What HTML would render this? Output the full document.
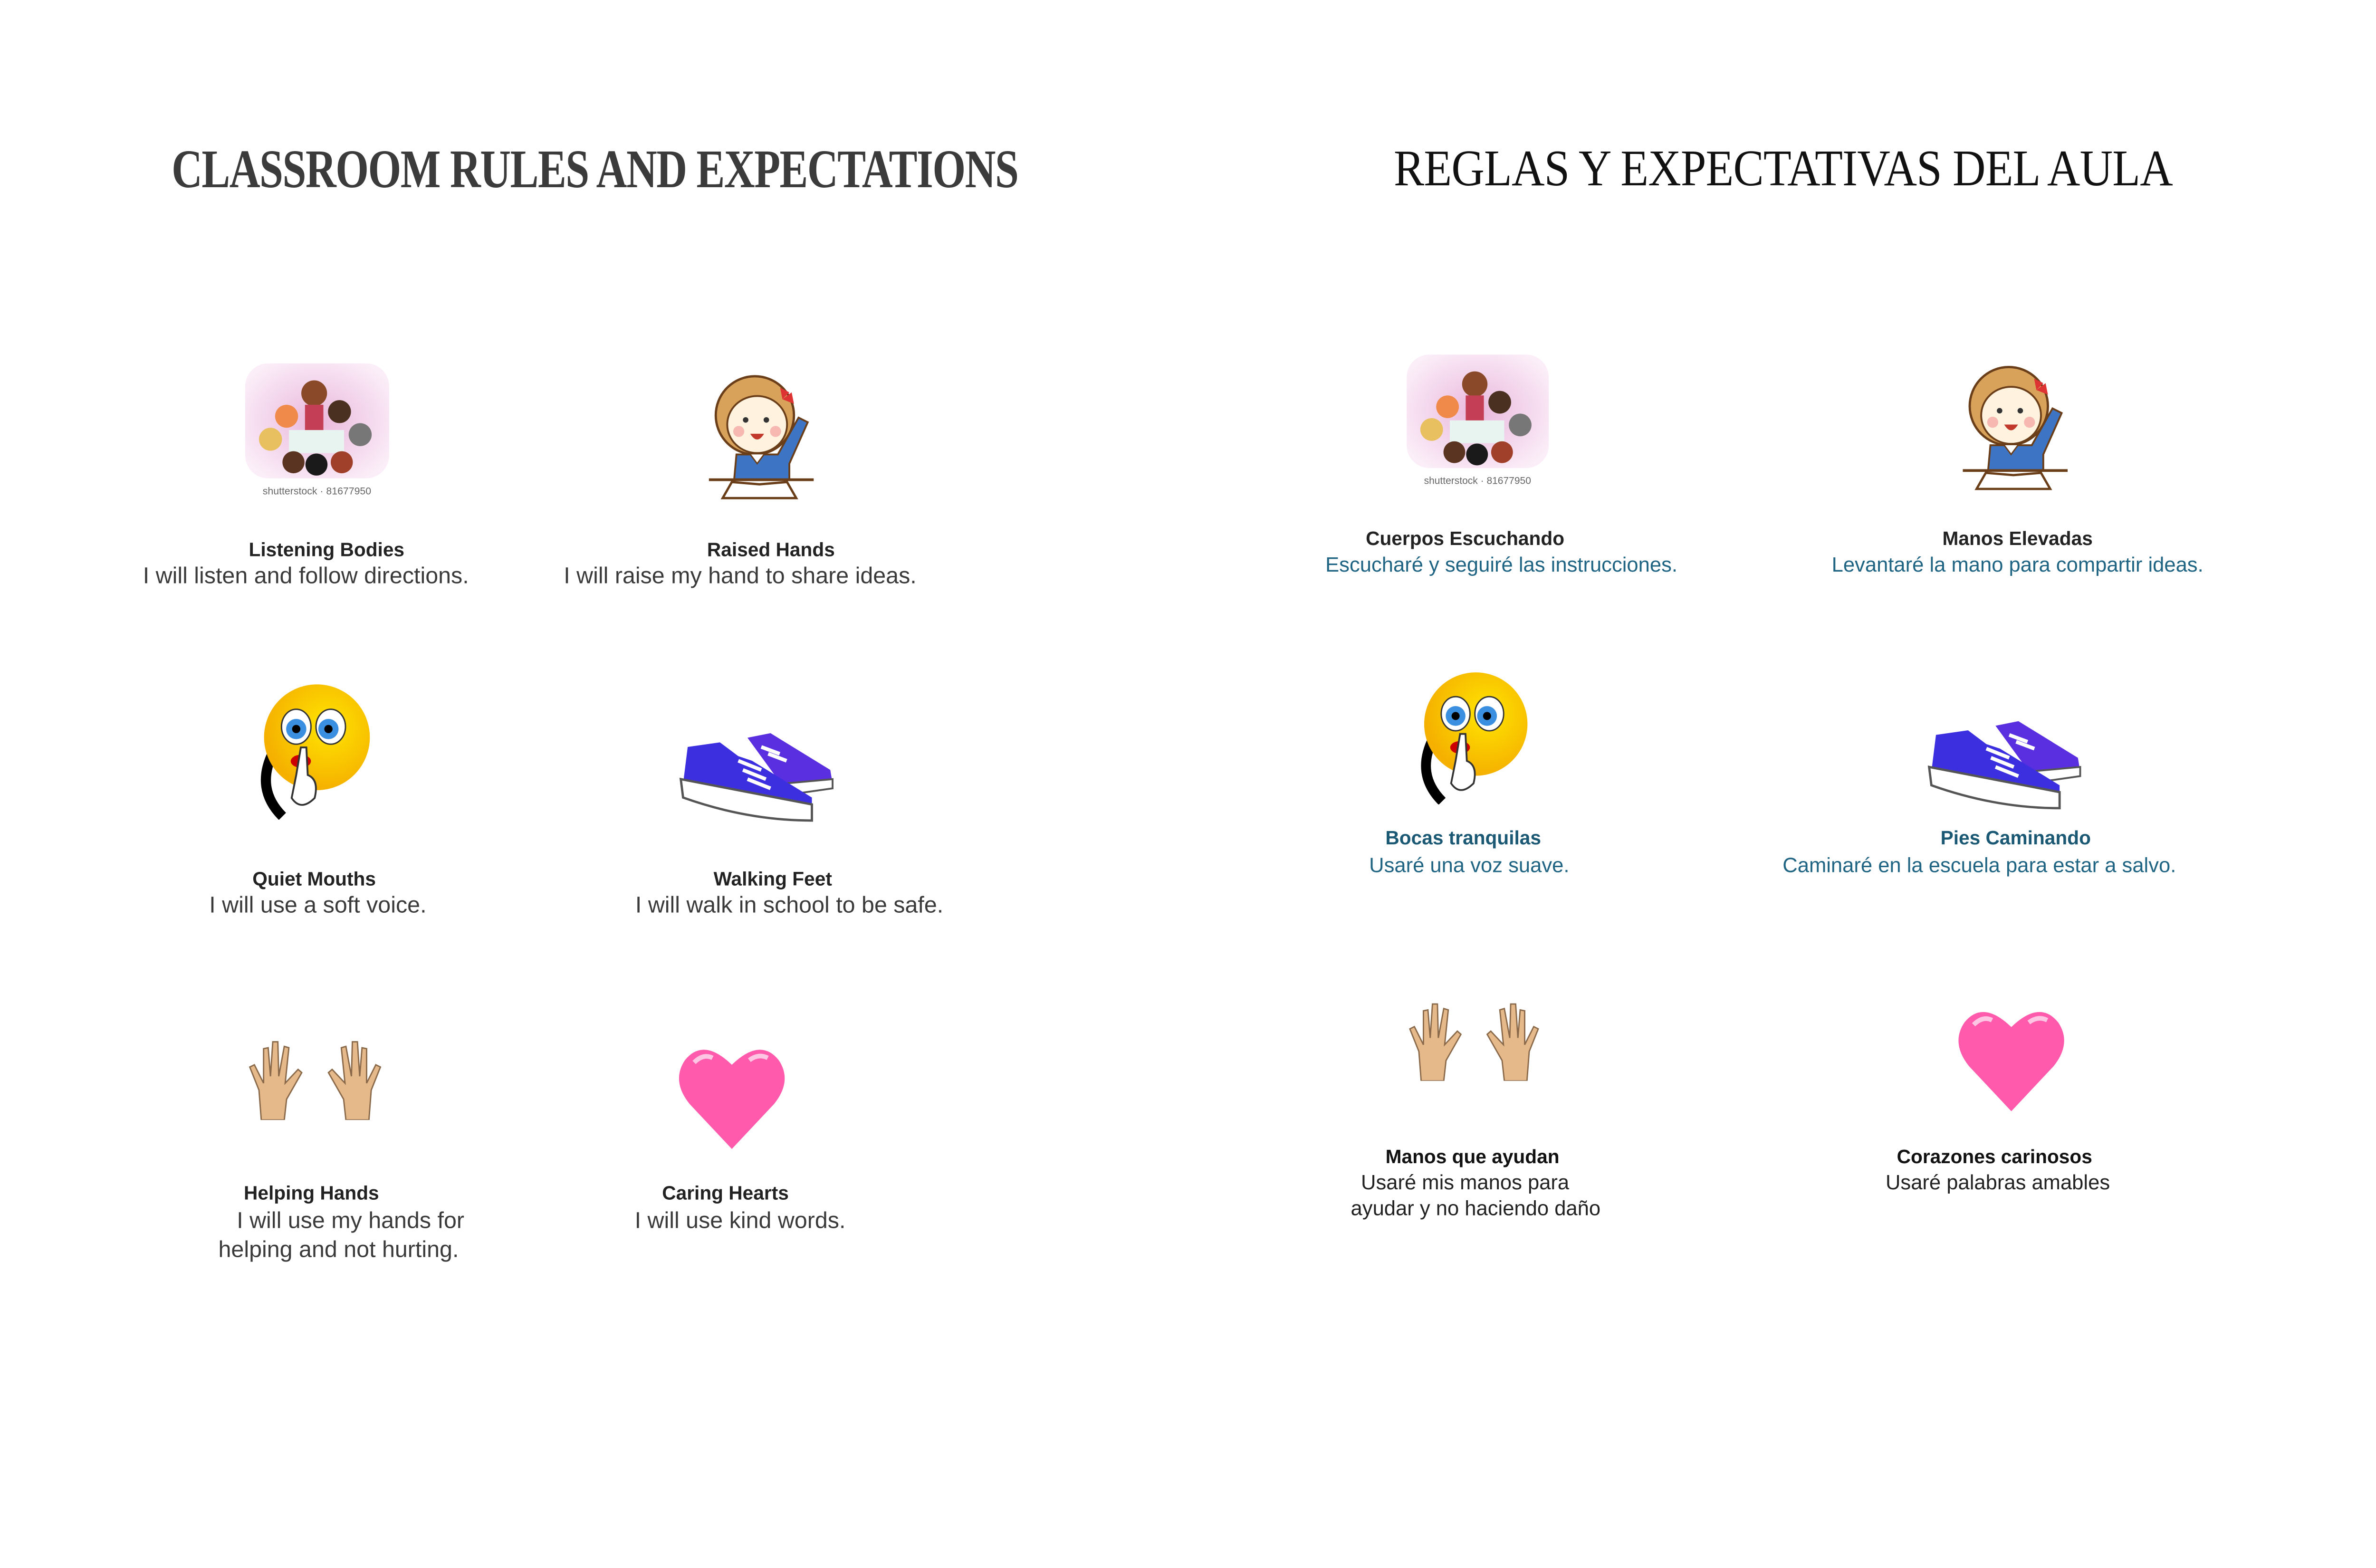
<!DOCTYPE html>
<html><head><meta charset="utf-8">
<style>
html,body{margin:0;padding:0;background:#fff;}
body{width:5100px;height:3300px;position:relative;overflow:hidden;font-family:"Liberation Sans",sans-serif;}
#w{position:absolute;left:0;top:0;width:5100px;height:3300px;transform:scale(0.968);transform-origin:0 0;}
.t{position:absolute;white-space:nowrap;transform:translateX(-50%);font-size:50px;line-height:56px;color:#3a3a3a;}
.r{font-size:45px;}
.b{font-weight:bold;color:#222;font-size:42px;}
.teal{color:#1f6483;}
.tb{font-weight:bold;color:#1a5874;font-size:42px;}
.title{position:absolute;white-space:nowrap;transform-origin:0 0;}
svg{position:absolute;}
</style></head><body><div id="w">

<div class="title" style="left:373px;top:300px;font-family:'Liberation Serif',serif;font-weight:bold;font-size:118px;color:#3b3b3b;transform:scaleX(0.786);letter-spacing:-2px;">CLASSROOM RULES AND EXPECTATIONS</div>
<div class="title" style="left:3030px;top:302px;font-family:'Liberation Serif',serif;font-size:112px;color:#111;transform:scaleX(0.888);letter-spacing:-1px;">REGLAS Y EXPECTATIVAS DEL AULA</div>

<svg style="left:528px;top:785px" width="323" height="304" viewBox="0 0 323 304">
<defs><radialGradient id="pg" cx="50%" cy="50%" r="60%"><stop offset="0" stop-color="#e9b7dc"/><stop offset="1" stop-color="#fbeef8"/></radialGradient></defs>
<rect x="5" y="5" width="313" height="250" rx="50" fill="url(#pg)"/>
<circle cx="155" cy="70" r="28" fill="#8a4a2a"/><rect x="135" y="95" width="40" height="80" fill="#c43f55"/>
<circle cx="95" cy="120" r="25" fill="#f08a4a"/><circle cx="210" cy="110" r="25" fill="#4a3020"/>
<circle cx="60" cy="170" r="25" fill="#e8c060"/><circle cx="255" cy="160" r="25" fill="#777"/>
<rect x="100" y="150" width="120" height="50" fill="#e8f4f0"/>
<circle cx="110" cy="220" r="24" fill="#5a3420"/><circle cx="160" cy="225" r="24" fill="#1a1a1a"/><circle cx="215" cy="220" r="24" fill="#a0402a"/>
<text x="161" y="290" font-size="22" fill="#666" text-anchor="middle" font-family="Liberation Sans">shutterstock · 81677950</text>
</svg>
<svg style="left:3049px;top:766px" width="327" height="300" viewBox="0 0 323 304">
<rect x="5" y="5" width="313" height="250" rx="50" fill="url(#pg)"/>
<circle cx="155" cy="70" r="28" fill="#8a4a2a"/><rect x="135" y="95" width="40" height="80" fill="#c43f55"/>
<circle cx="95" cy="120" r="25" fill="#f08a4a"/><circle cx="210" cy="110" r="25" fill="#4a3020"/>
<circle cx="60" cy="170" r="25" fill="#e8c060"/><circle cx="255" cy="160" r="25" fill="#777"/>
<rect x="100" y="150" width="120" height="50" fill="#e8f4f0"/>
<circle cx="110" cy="220" r="24" fill="#5a3420"/><circle cx="160" cy="225" r="24" fill="#1a1a1a"/><circle cx="215" cy="220" r="24" fill="#a0402a"/>
<text x="161" y="290" font-size="22" fill="#666" text-anchor="middle" font-family="Liberation Sans">shutterstock · 81677950</text>
</svg>

<svg style="left:1541px;top:808px" width="228" height="281" viewBox="0 0 228 281">
<circle cx="100" cy="95" r="85" fill="#d9a25a" stroke="#6b3e1a" stroke-width="5"/>
<ellipse cx="105" cy="115" rx="65" ry="62" fill="#fff3e0" stroke="#6b3e1a" stroke-width="4"/>
<circle cx="80" cy="105" r="6" fill="#333"/><circle cx="125" cy="105" r="6" fill="#333"/>
<circle cx="65" cy="130" r="12" fill="#f6b8b0"/><circle cx="145" cy="130" r="12" fill="#f6b8b0"/>
<path d="M90 135 Q105 160 120 135 Z" fill="#c0392b"/>
<path d="M160 60 l20 -15 l5 25 z M160 60 l-5 -25 l20 10z" fill="#d33"/>
<path d="M60 180 L150 180 L195 100 L215 110 L175 200 L175 235 L55 235 Z" fill="#3d75c4" stroke="#6b3e1a" stroke-width="4"/>
<path d="M90 180 L105 200 L120 180" fill="#fff" stroke="#6b3e1a" stroke-width="3"/>
<line x1="0" y1="235" x2="228" y2="235" stroke="#6b3e1a" stroke-width="6"/>
<path d="M30 275 L50 240 L110 245 L170 240 L190 275 Z" fill="#fff" stroke="#6b3e1a" stroke-width="5"/>
</svg>
<svg style="left:4267px;top:785px" width="228" height="287" viewBox="0 0 228 281">
<circle cx="100" cy="95" r="85" fill="#d9a25a" stroke="#6b3e1a" stroke-width="5"/>
<ellipse cx="105" cy="115" rx="65" ry="62" fill="#fff3e0" stroke="#6b3e1a" stroke-width="4"/>
<circle cx="80" cy="105" r="6" fill="#333"/><circle cx="125" cy="105" r="6" fill="#333"/>
<circle cx="65" cy="130" r="12" fill="#f6b8b0"/><circle cx="145" cy="130" r="12" fill="#f6b8b0"/>
<path d="M90 135 Q105 160 120 135 Z" fill="#c0392b"/>
<path d="M160 60 l20 -15 l5 25 z M160 60 l-5 -25 l20 10z" fill="#d33"/>
<path d="M60 180 L150 180 L195 100 L215 110 L175 200 L175 235 L55 235 Z" fill="#3d75c4" stroke="#6b3e1a" stroke-width="4"/>
<path d="M90 180 L105 200 L120 180" fill="#fff" stroke="#6b3e1a" stroke-width="3"/>
<line x1="0" y1="235" x2="228" y2="235" stroke="#6b3e1a" stroke-width="6"/>
<path d="M30 275 L50 240 L110 245 L170 240 L190 275 Z" fill="#fff" stroke="#6b3e1a" stroke-width="5"/>
</svg>

<svg style="left:554px;top:1485px" width="255" height="297" viewBox="0 0 255 297">
<defs><radialGradient id="yg" cx="60%" cy="40%" r="60%"><stop offset="0" stop-color="#ffe600"/><stop offset="1" stop-color="#f5b000"/></radialGradient></defs>
<path d="M40 150 Q0 230 60 290" fill="none" stroke="#000" stroke-width="22"/>
<circle cx="135" cy="118" r="115" fill="url(#yg)"/>
<ellipse cx="90" cy="95" rx="32" ry="38" fill="#fff" stroke="#333" stroke-width="3"/><circle cx="90" cy="100" r="22" fill="#3a8fe0"/><circle cx="90" cy="100" r="9" fill="#000"/>
<ellipse cx="165" cy="95" rx="32" ry="38" fill="#fff" stroke="#333" stroke-width="3"/><circle cx="160" cy="100" r="22" fill="#3a8fe0"/><circle cx="160" cy="100" r="9" fill="#000"/>
<ellipse cx="100" cy="170" rx="22" ry="14" fill="#c00"/>
<path d="M100 140 L112 140 L115 200 Q140 210 130 250 Q100 280 80 250 L90 200 Z" fill="#fff" stroke="#333" stroke-width="4"/>
</svg>
<svg style="left:3076px;top:1459px" width="250" height="290" viewBox="0 0 255 297">
<path d="M40 150 Q0 230 60 290" fill="none" stroke="#000" stroke-width="22"/>
<circle cx="135" cy="118" r="115" fill="url(#yg)"/>
<ellipse cx="90" cy="95" rx="32" ry="38" fill="#fff" stroke="#333" stroke-width="3"/><circle cx="90" cy="100" r="22" fill="#3a8fe0"/><circle cx="90" cy="100" r="9" fill="#000"/>
<ellipse cx="165" cy="95" rx="32" ry="38" fill="#fff" stroke="#333" stroke-width="3"/><circle cx="160" cy="100" r="22" fill="#3a8fe0"/><circle cx="160" cy="100" r="9" fill="#000"/>
<ellipse cx="100" cy="170" rx="22" ry="14" fill="#c00"/>
<path d="M100 140 L112 140 L115 200 Q140 210 130 250 Q100 280 80 250 L90 200 Z" fill="#fff" stroke="#333" stroke-width="4"/>
</svg>

<svg style="left:1475px;top:1584px" width="340" height="215" viewBox="0 0 340 215">
<path d="M150 20 L200 10 L330 90 L335 120 L230 130 Z" fill="#5a2fe0"/>
<path d="M225 120 L335 110 L335 130 L230 145 Z" fill="#fff" stroke="#555" stroke-width="4"/>
<path d="M20 40 L90 30 L130 60 L160 70 L290 150 L290 170 L10 120 Z" fill="#3b2fe0"/>
<path d="M5 110 L290 165 L290 200 Q150 200 10 150 Z" fill="#fff" stroke="#555" stroke-width="5"/>
<path d="M130 70 l50 20 M140 90 l50 20 M150 110 l50 20 M180 40 l40 15 M195 55 l40 15" stroke="#fff" stroke-width="8"/>
</svg>
<svg style="left:4188px;top:1558px" width="340" height="214" viewBox="0 0 340 215">
<path d="M150 20 L200 10 L330 90 L335 120 L230 130 Z" fill="#5a2fe0"/>
<path d="M225 120 L335 110 L335 130 L230 145 Z" fill="#fff" stroke="#555" stroke-width="4"/>
<path d="M20 40 L90 30 L130 60 L160 70 L290 150 L290 170 L10 120 Z" fill="#3b2fe0"/>
<path d="M5 110 L290 165 L290 200 Q150 200 10 150 Z" fill="#fff" stroke="#555" stroke-width="5"/>
<path d="M130 70 l50 20 M140 90 l50 20 M150 110 l50 20 M180 40 l40 15 M195 55 l40 15" stroke="#fff" stroke-width="8"/>
</svg>

<svg style="left:538px;top:2260px" width="294" height="175" viewBox="0 0 294 175">
<g fill="#e5b98a" stroke="#8a6a4a" stroke-width="3">
<path d="M30 175 L25 110 L5 60 L15 55 L35 95 L35 20 L45 18 L50 80 L55 5 L66 5 L68 80 L80 15 L90 18 L82 95 L110 65 L118 72 L85 130 L80 175 Z"/>
<path d="M264 175 L269 110 L289 60 L279 55 L259 95 L259 20 L249 18 L244 80 L239 5 L228 5 L226 80 L214 15 L204 18 L212 95 L184 65 L176 72 L209 130 L214 175 Z"/>
</g></svg>
<svg style="left:3059px;top:2178px" width="291" height="172" viewBox="0 0 294 175">
<g fill="#e5b98a" stroke="#8a6a4a" stroke-width="3">
<path d="M30 175 L25 110 L5 60 L15 55 L35 95 L35 20 L45 18 L50 80 L55 5 L66 5 L68 80 L80 15 L90 18 L82 95 L110 65 L118 72 L85 130 L80 175 Z"/>
<path d="M264 175 L269 110 L289 60 L279 55 L259 95 L259 20 L249 18 L244 80 L239 5 L228 5 L226 80 L214 15 L204 18 L212 95 L184 65 L176 72 L209 130 L214 175 Z"/>
</g></svg>

<svg style="left:1469px;top:2270px" width="244" height="228" viewBox="0 0 244 228">
<path d="M122 228 L30 130 Q-10 80 20 35 Q60 -15 122 45 Q184 -15 224 35 Q254 80 214 130 Z" fill="#ff5aac"/>
<path d="M40 40 Q60 20 80 30" stroke="#ffc6e4" stroke-width="10" fill="none"/><path d="M160 35 Q180 20 200 30" stroke="#ffc6e4" stroke-width="10" fill="none"/>
</svg>
<svg style="left:4250px;top:2188px" width="245" height="228" viewBox="0 0 244 228">
<path d="M122 228 L30 130 Q-10 80 20 35 Q60 -15 122 45 Q184 -15 224 35 Q254 80 214 130 Z" fill="#ff5aac"/>
<path d="M40 40 Q60 20 80 30" stroke="#ffc6e4" stroke-width="10" fill="none"/><path d="M160 35 Q180 20 200 30" stroke="#ffc6e4" stroke-width="10" fill="none"/>
</svg>

<div class="t b" style="left:710px;top:1167px">Listening Bodies</div>
<div class="t" style="left:665px;top:1223px">I will listen and follow directions.</div>
<div class="t b" style="left:1676px;top:1167px">Raised Hands</div>
<div class="t" style="left:1609px;top:1223px">I will raise my hand to share ideas.</div>
<div class="t b" style="left:683px;top:1883px">Quiet Mouths</div>
<div class="t" style="left:691px;top:1939px">I will use a soft voice.</div>
<div class="t b" style="left:1680px;top:1883px">Walking Feet</div>
<div class="t" style="left:1716px;top:1939px">I will walk in school to be safe.</div>
<div class="t b" style="left:677px;top:2566px">Helping Hands</div>
<div class="t" style="left:762px;top:2625px">I will use my hands for</div>
<div class="t" style="left:736px;top:2688px">helping and not hurting.</div>
<div class="t b" style="left:1577px;top:2566px">Caring Hearts</div>
<div class="t" style="left:1609px;top:2625px">I will use kind words.</div>

<div class="t b" style="left:3185px;top:1143px">Cuerpos Escuchando</div>
<div class="t teal r" style="left:3264px;top:1200px">Escucharé y seguiré las instrucciones.</div>
<div class="t b" style="left:4386px;top:1143px">Manos Elevadas</div>
<div class="t teal r" style="left:4386px;top:1200px">Levantaré la mano para compartir ideas.</div>
<div class="t tb" style="left:3181px;top:1794px">Bocas tranquilas</div>
<div class="t teal r" style="left:3194px;top:1853px">Usaré una voz suave.</div>
<div class="t tb" style="left:4382px;top:1794px">Pies Caminando</div>
<div class="t teal r" style="left:4303px;top:1853px">Caminaré en la escuela para estar a salvo.</div>
<div class="t b" style="left:3201px;top:2487px;color:#111">Manos que ayudan</div>
<div class="t r" style="left:3185px;top:2543px;color:#222">Usaré mis manos para</div>
<div class="t r" style="left:3208px;top:2599px;color:#222">ayudar y no haciendo daño</div>
<div class="t b" style="left:4336px;top:2487px;color:#111">Corazones carinosos</div>
<div class="t r" style="left:4343px;top:2543px;color:#222">Usaré palabras amables</div>

</div></body></html>
